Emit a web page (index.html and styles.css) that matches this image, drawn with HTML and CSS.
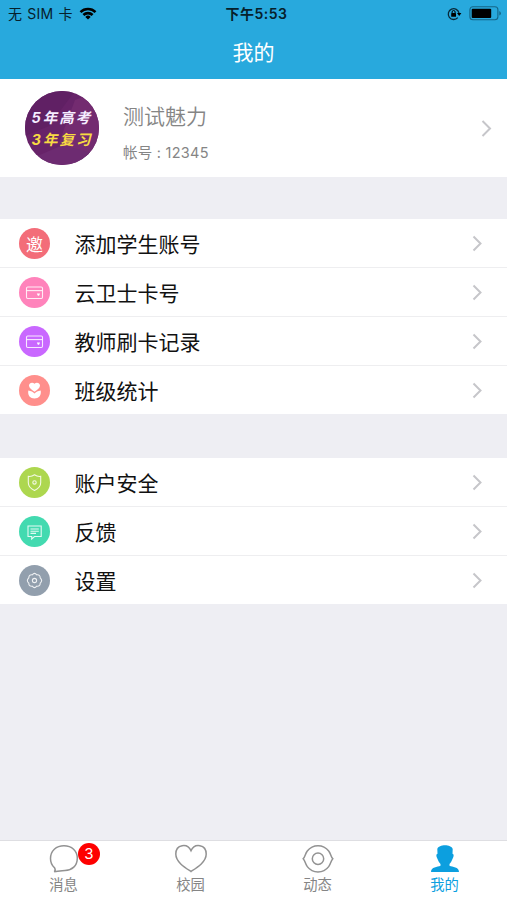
FILE: index.html
```html
<!DOCTYPE html>
<html lang="zh-CN">
<head>
<meta charset="utf-8">
<title>我的</title>
<link rel="stylesheet" href="styles.css">
</head>
<body>
<div class="app">
  <header class="header">
    <div class="status">
      <div class="status-left"><span class="carrier">无 SIM 卡</span>
        <svg width="18" height="13" viewBox="0 0 18 13"><path d="M0.6 4.2A12 12 0 0 1 17.4 4.2L15.6 6A9.4 9.4 0 0 0 2.4 6ZM3.5 7.1A7.8 7.8 0 0 1 14.5 7.1L12.7 8.9A5.3 5.3 0 0 0 5.3 8.9ZM6.3 9.9A3.9 3.9 0 0 1 11.7 9.9L9 12.6Z"/></svg>
      </div>
      <div class="clock">下午5:53</div>
      <div class="status-right">
        <svg width="15" height="14" viewBox="0 0 15 14"><path d="M10.8 10.6A5.4 5.4 0 1 1 12 6.2" fill="none" stroke="#08293a" stroke-width="1.3"/><path d="M10 6h4.4l-2.2 3z"/><rect x="4.2" y="6" width="4.8" height="3.8" rx=".4"/><path d="M5.1 6.2V5a1.5 1.5 0 0 1 3 0v1.2" fill="none" stroke="#000"/></svg>
        <svg width="33" height="15" viewBox="0 0 33 15"><rect x=".9" y=".8" width="28" height="12.9" rx="3" fill="none" stroke="#156687" stroke-width="1.1"/><rect x="2.7" y="2.7" width="19.5" height="9.2" rx="1"/><path d="M30.3 5v4.6q1.6-.7 1.6-2.3T30.3 5z" fill="#156687"/></svg>
      </div>
    </div>
    <h1 class="title">我的</h1>
  </header>

  <section class="profile">
    <div class="avatar">
      <svg class="facets" viewBox="0 0 74 74"><path d="M50 9L74 0V74L34 52Z" fill="#732b70"/><path d="M10 66L38 54L74 64V74H10Z" fill="#6d2b71"/><path d="M0 0H50L24 35L0 45Z" fill="#602064"/></svg>
      <span class="line exam">5年高考</span><span class="line review">3年复习</span>
    </div>
    <div class="who"><div class="name">测试魅力</div><div class="account">帐号 : 12345</div></div>
    <svg class="chevron" width="11" height="17" viewBox="0 0 11 17"><path d="M1.5 1L9 8.5L1.5 16"/></svg>
  </section>

  <nav class="group first">
    <a class="row"><span class="icon invite">邀</span><span class="label">添加学生账号</span><svg class="chevron" width="11" height="17" viewBox="0 0 11 17"><path d="M1.5 1.5L8.5 8.5L1.5 15.5"/></svg></a>
    <a class="row"><span class="icon pink"><svg width="31" height="31" viewBox="0 0 31 31"><rect x="7.5" y="10" width="16" height="11.5" rx="1.2"/><path d="M7.5 13.6h16"/><path class="solid" d="M17.8 16.4h3.2l-.9 2.3h-1.2z"/></svg></span><span class="label">云卫士卡号</span><svg class="chevron" width="11" height="17" viewBox="0 0 11 17"><path d="M1.5 1.5L8.5 8.5L1.5 15.5"/></svg></a>
    <a class="row"><span class="icon purple"><svg width="31" height="31" viewBox="0 0 31 31"><rect x="7.5" y="10" width="16" height="11.5" rx="1.2"/><path d="M7.5 13.6h16"/><path class="solid" d="M17.8 16.4h3.2l-.9 2.3h-1.2z"/></svg></span><span class="label">教师刷卡记录</span><svg class="chevron" width="11" height="17" viewBox="0 0 11 17"><path d="M1.5 1.5L8.5 8.5L1.5 15.5"/></svg></a>
    <a class="row"><span class="icon coral"><svg width="31" height="31" viewBox="0 0 31 31"><path class="solid" d="M15.5 16.8C12.5 14.9 10 13 10 10.6C10 7.4 14 6.8 15.5 8.8C17 6.8 21 7.4 21 10.6C21 13 18.5 14.9 15.5 16.8ZM9.3 15.6C12 15.9 14.2 17.2 15.5 18.6C16.8 17.2 19 15.9 21.7 15.6C22.5 20.7 19.7 23.6 15.5 23.6S8.5 20.7 9.3 15.6Z"/></svg></span><span class="label">班级统计</span><svg class="chevron" width="11" height="17" viewBox="0 0 11 17"><path d="M1.5 1.5L8.5 8.5L1.5 15.5"/></svg></a>
  </nav>

  <nav class="group second">
    <a class="row"><span class="icon green"><svg width="31" height="31" viewBox="0 0 31 31"><path d="M15.5 7.8Q18.5 9.9 21.7 9.4V15.5Q21.7 20.7 15.5 23.5Q9.3 20.7 9.3 15.5V9.4Q12.5 9.9 15.5 7.8Z"/><circle cx="15.5" cy="15.4" r="1.7"/></svg></span><span class="label">账户安全</span><svg class="chevron" width="11" height="17" viewBox="0 0 11 17"><path d="M1.5 1.5L8.5 8.5L1.5 15.5"/></svg></a>
    <a class="row"><span class="icon teal"><svg width="31" height="31" viewBox="0 0 31 31"><path d="M9 10H22.2V20.5H15.5L12.7 23V20.5H9ZM11.5 13H19.8M11.5 15.2H19.8M11.5 17.4H17"/></svg></span><span class="label">反馈</span><svg class="chevron" width="11" height="17" viewBox="0 0 11 17"><path d="M1.5 1.5L8.5 8.5L1.5 15.5"/></svg></a>
    <a class="row"><span class="icon slate"><svg width="31" height="31" viewBox="0 0 31 31"><path d="M13.3 9.8Q15.5 6.9 17.7 9.8Q21.2 9.3 21.2 12.8Q24.1 15.5 21.2 18.2Q21.2 21.7 17.7 21.2Q15.5 24.1 13.3 21.2Q9.8 21.7 9.8 18.2Q6.9 15.5 9.8 12.8Q9.8 9.3 13.3 9.8Z"/><circle cx="15.5" cy="15.5" r="2.1"/></svg></span><span class="label">设置</span><svg class="chevron" width="11" height="17" viewBox="0 0 11 17"><path d="M1.5 1.5L8.5 8.5L1.5 15.5"/></svg></a>
  </nav>

  <footer class="tabs">
    <a class="tab"><svg width="32" height="32" viewBox="0 0 32 32"><path d="M6.2 28.7Q8 27.3 6.6 24.8C3.8 22.6 2.5 19.5 2.5 15.6C2.5 7.8 8.2 2.7 16 2.7S29.3 7.8 29.3 15.2C29.3 22.8 24 27.2 17 27.6C13 27.9 10 27.9 6.2 28.7Z"/></svg><span class="badge">3</span><span class="caption">消息</span></a>
    <a class="tab"><svg width="34" height="32" viewBox="0 0 34 32"><path d="M17 28.5C11 24.6 1.8 19 1.8 11C1.8 1.1 13.6-.2 17 7.7C20.4-.2 32.2 1.1 32.2 11C32.2 19 23 24.6 17 28.5Z"/></svg><span class="caption">校园</span></a>
    <a class="tab"><svg width="32" height="32" viewBox="0 0 32 32"><path d="M1.2 15.8C3.4 13.5 3 11 5.3 8C8 4.5 11.5 2.7 16 2.7S24 4.5 26.7 8C29 11 28.6 13.5 30.8 15.8C28.6 18.1 29 20.6 26.7 23.6C24 27.1 20.5 28.9 16 28.9S8 27.1 5.3 23.6C3 20.6 3.4 18.1 1.2 15.8Z"/><circle cx="16" cy="15.8" r="5.7"/></svg><span class="caption">动态</span></a>
    <a class="tab active"><svg width="32" height="32" viewBox="0 0 32 32"><path d="M8.3 6C9.8 1 22.2 1 23.7 6L23.5 10.8Q25.7 11.5 23.7 15.6Q22.3 19.5 20.5 21V22.8C23.5 24.2 30 23.8 30 29H2C2 23.8 8.5 24.2 11.5 22.8V21Q9.7 19.5 8.3 15.6Q6.3 11.5 8.5 10.8Z"/></svg><span class="caption">我的</span></a>
  </footer>
</div>
</body>
</html>
```
FILE: styles.css
```css
* { box-sizing: border-box; }
body {
  margin: 0;
  background: #eeeef3;
  font-family: Inter, "Noto Sans CJK SC", sans-serif;
}
.app {
  height: 900px;
  display: flex;
  flex-direction: column;
  overflow: hidden;
}
svg { display: block; flex: none; }
.header {
  height: 79px;
  flex: none;
  background: #28a9dd;
}
.status {
  height: 27px;
  display: grid;
  grid-template-columns: 1fr auto 1fr;
  align-items: center;
  padding: 0 5px 0 8px;
  color: #06202b;
  font-size: 14.5px;
  line-height: 27px;
}
.status-left, .status-right { display: flex; align-items: center; gap: 7px; }
.status-left { gap: 6px; }
.carrier { font-size: 14px; letter-spacing: .2px; word-spacing: 1px; }
.status-right { justify-content: flex-end; }
.clock { font-weight: 600; font-size: 14px; letter-spacing: .5px; margin-left: 3px; }
.title {
  margin: 0;
  color: #fff;
  text-align: center;
  font-size: 21px;
  line-height: 52px;
  font-weight: 400;
}
.profile {
  height: 98px;
  flex: none;
  display: flex;
  align-items: center;
  padding: 0 15px 0 25px;
  background: #fff;
}
.avatar {
  position: relative;
  width: 74px;
  height: 74px;
  border-radius: 50%;
  overflow: hidden;
  background: #672369;
  display: flex;
  flex-direction: column;
  align-items: center;
  gap: 7px;
  padding-top: 19px;
}
.facets { position: absolute; inset: 0; }
.line {
  position: relative;
  font-size: 14.5px;
  line-height: 15px;
  font-weight: 700;
  font-style: italic;
  letter-spacing: 2px;
  white-space: nowrap;
}
.exam { color: #f5edff; }
.review { color: #f7da43; }
.who {
  flex: 1;
  margin-left: 24px;
  padding-top: 8px;
  color: #858585;
}
.name { font-size: 21px; line-height: 34px; font-weight: 350; }
.account { font-size: 14.5px; line-height: 24px; margin-top: 7px; letter-spacing: .25px; }
.chevron { fill: none; stroke: #c6c6ca; stroke-width: 2; }
.group { flex: none; background: #fff; }
.first { margin-top: 42px; }
.second { margin-top: 44px; }
.row {
  height: 49px;
  display: flex;
  align-items: center;
  padding: 0 24px 0 19px;
  border-bottom: 1px solid #eeeef0;
}
.row:last-child { height: 48px; border-bottom: 0; }
.icon {
  width: 31px;
  height: 31px;
  border-radius: 50%;
  display: flex;
  align-items: center;
  justify-content: center;
  color: #fff;
  font-size: 17px;
}
.icon svg { fill: none; stroke: #fff; stroke-width: 1.1; stroke-opacity: .85; }
.icon .solid { fill: #fff; stroke: none; }
.invite { background: #f36d79; }
.pink { background: #ff83bb; }
.purple { background: #c968ff; }
.coral { background: #ff8f8c; }
.green { background: #add74f; }
.teal { background: #43dab0; }
.slate { background: #929fad; }
.label {
  flex: 1;
  margin-left: 24.5px;
  padding-top: 3px;
  color: #111;
  font-size: 21px;
  line-height: 45px;
}
.tabs {
  height: 60px;
  flex: none;
  margin-top: auto;
  display: grid;
  grid-template-columns: repeat(4, 127px);
  background: #fff;
  border-top: 1px solid #dedee2;
}
.tab {
  position: relative;
  display: flex;
  flex-direction: column;
  align-items: center;
  padding-top: 2px;
  color: #858585;
}
.tab svg { fill: none; stroke: #929292; stroke-width: 1.5; }
.caption { font-size: 14.3px; line-height: 20px; }
.tab.active { color: #0c9fdf; }
.tab.active svg { fill: #0c9fdf; stroke: none; }
.badge {
  position: absolute;
  top: 2px;
  left: 78px;
  width: 22px;
  height: 22px;
  border-radius: 50%;
  background: #fe0000;
  color: #fff;
  font-size: 15px;
  line-height: 22px;
  text-align: center;
}
```
